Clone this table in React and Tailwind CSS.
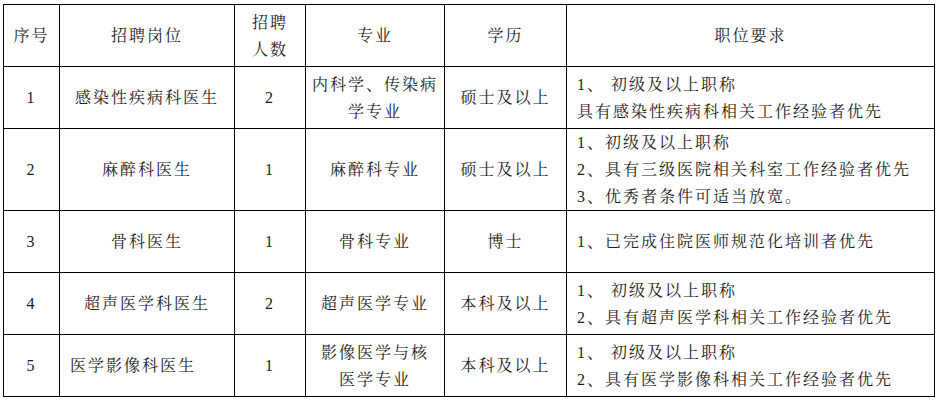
import React from 'react';

const rows = [
  {
    no: '1',
    post: '感染性疾病科医生',
    num: '2',
    major: ['内科学、传染病', '学专业'],
    edu: '硕士及以上',
    req: ['1、 初级及以上职称', '具有感染性疾病科相关工作经验者优先'],
    h: 'h-[62px]',
  },
  {
    no: '2',
    post: '麻醉科医生',
    num: '1',
    major: ['麻醉科专业'],
    edu: '硕士及以上',
    req: ['1、初级及以上职称', '2、具有三级医院相关科室工作经验者优先', '3、优秀者条件可适当放宽。'],
    h: 'h-[82px]',
  },
  {
    no: '3',
    post: '骨科医生',
    num: '1',
    major: ['骨科专业'],
    edu: '博士',
    req: ['1、已完成住院医师规范化培训者优先'],
    h: 'h-[62px]',
  },
  {
    no: '4',
    post: '超声医学科医生',
    num: '2',
    major: ['超声医学专业'],
    edu: '本科及以上',
    req: ['1、 初级及以上职称', '2、具有超声医学科相关工作经验者优先'],
    h: 'h-[62px]',
  },
  {
    no: '5',
    post: '医学影像科医生',
    num: '1',
    major: ['影像医学与核', '医学专业'],
    edu: '本科及以上',
    req: ['1、 初级及以上职称', '2、具有医学影像科相关工作经验者优先'],
    h: 'h-[62px]',
    postLeft: true,
  },
];

const cell = 'border border-black p-0 align-middle';

export default function App() {
  return (
    <div className="w-[939px] h-[403px] bg-white pt-[4px] pl-[3px]">
      <table
        className="table-fixed border-collapse text-[16px] leading-[27px] tracking-[2px] text-[#1c1c1c]"
        style={{ fontFamily: '"Liberation Serif", "Noto Serif CJK SC", "Noto Sans CJK SC", serif' }}
      >
        <colgroup>
          <col className="w-[56px]" />
          <col className="w-[175px]" />
          <col className="w-[71px]" />
          <col className="w-[139px]" />
          <col className="w-[122px]" />
          <col className="w-[368px]" />
        </colgroup>
        <thead>
          <tr className="h-[62px]">
            <th className={`${cell} font-normal text-center`}>序号</th>
            <th className={`${cell} font-normal text-center`}>招聘岗位</th>
            <th className={`${cell} font-normal text-center`}>
              招聘
              <br />
              人数
            </th>
            <th className={`${cell} font-normal text-center`}>专业</th>
            <th className={`${cell} font-normal text-center`}>学历</th>
            <th className={`${cell} font-normal text-center`}>职位要求</th>
          </tr>
        </thead>
        <tbody>
          {rows.map((r) => (
            <tr key={r.no} className={r.h}>
              <td className={`${cell} text-center`}>{r.no}</td>
              <td className={`${cell} ${r.postLeft ? 'text-left pl-[10px]' : 'text-center'}`}>{r.post}</td>
              <td className={`${cell} text-center`}>{r.num}</td>
              <td className={`${cell} text-center`}>
                {r.major.map((m) => (
                  <div key={m}>{m}</div>
                ))}
              </td>
              <td className={`${cell} text-center`}>{r.edu}</td>
              <td className={`${cell} text-left pl-[10px]`}>
                {r.req.map((q) => (
                  <div key={q} className="whitespace-pre">{q}</div>
                ))}
              </td>
            </tr>
          ))}
        </tbody>
      </table>
    </div>
  );
}
